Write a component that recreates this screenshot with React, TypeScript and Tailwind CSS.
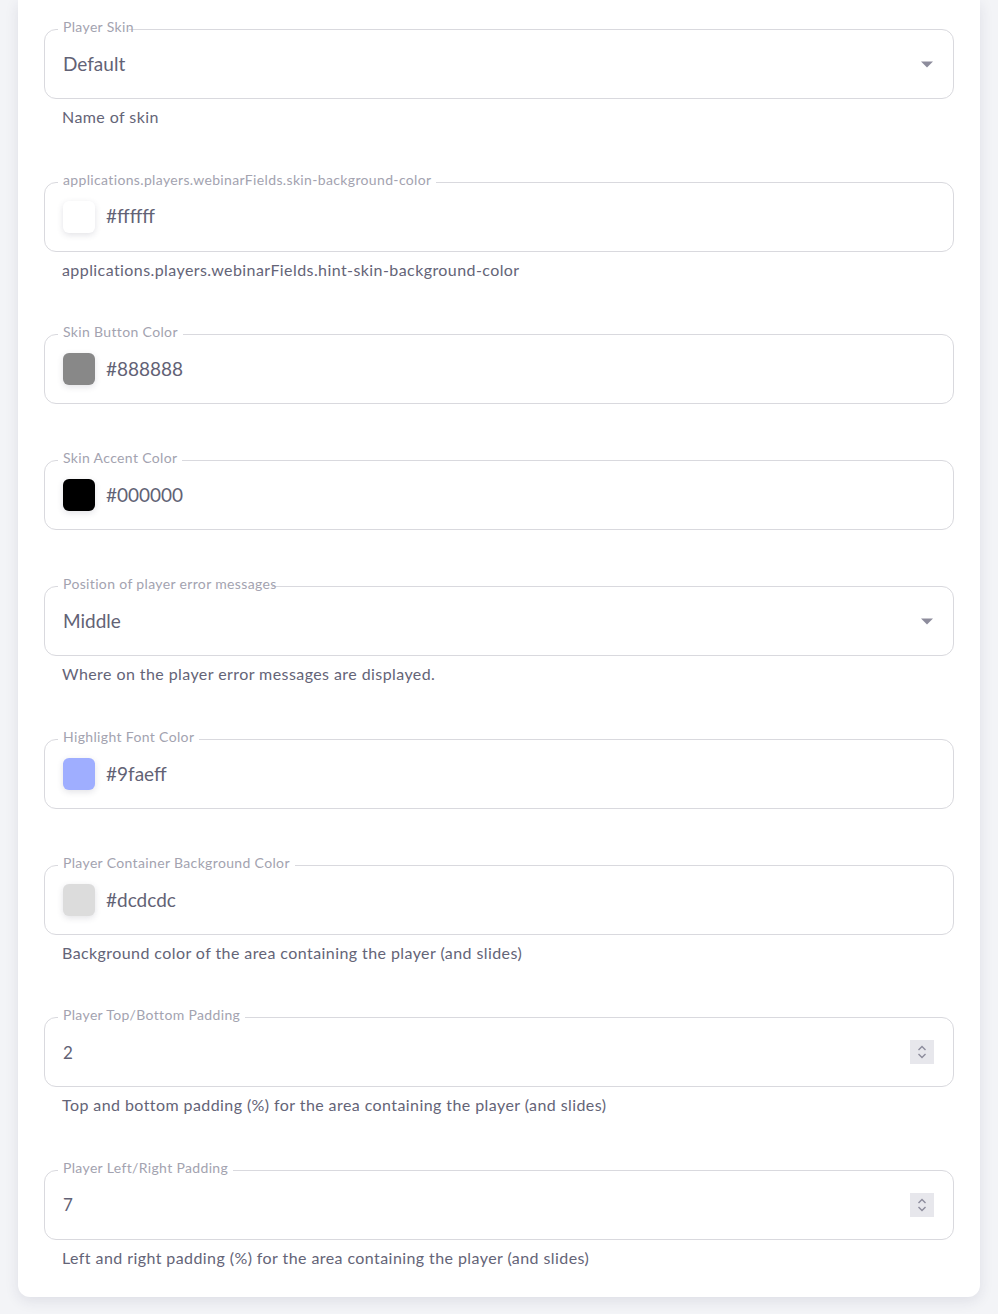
import React from "react";

type Field =
  | { kind: "select"; label: string; value: string; hint?: string }
  | { kind: "color"; label: string; value: string; swatch: string; hint?: string }
  | { kind: "number"; label: string; value: string; hint?: string };

const fields: Field[] = [
  { kind: "select", label: "Player Skin", value: "Default", hint: "Name of skin" },
  {
    kind: "color",
    label: "applications.players.webinarFields.skin-background-color",
    value: "#ffffff",
    swatch: "#ffffff",
    hint: "applications.players.webinarFields.hint-skin-background-color",
  },
  { kind: "color", label: "Skin Button Color", value: "#888888", swatch: "#888888" },
  { kind: "color", label: "Skin Accent Color", value: "#000000", swatch: "#000000" },
  {
    kind: "select",
    label: "Position of player error messages",
    value: "Middle",
    hint: "Where on the player error messages are displayed.",
  },
  { kind: "color", label: "Highlight Font Color", value: "#9faeff", swatch: "#9faeff" },
  {
    kind: "color",
    label: "Player Container Background Color",
    value: "#dcdcdc",
    swatch: "#dcdcdc",
    hint: "Background color of the area containing the player (and slides)",
  },
  {
    kind: "number",
    label: "Player Top/Bottom Padding",
    value: "2",
    hint: "Top and bottom padding (%) for the area containing the player (and slides)",
  },
  {
    kind: "number",
    label: "Player Left/Right Padding",
    value: "7",
    hint: "Left and right padding (%) for the area containing the player (and slides)",
  },
];

function Label({ text, narrow }: { text: string; narrow: boolean }) {
  return (
    <span
      className={
        "absolute left-[13px] top-[-13px] h-[20px] px-[5px] text-[14px] leading-[20px] tracking-[0.35px] text-[#a3a3b0] whitespace-nowrap " +
        (narrow
          ? "bg-[linear-gradient(to_right,white_calc(100%-10px),transparent_calc(100%-10px))]"
          : "bg-white")
      }
    >
      {text}
    </span>
  );
}

function FieldBox({ f }: { f: Field }) {
  return (
    <div>
      <div className="relative h-[70px] rounded-[12px] border border-[#d9d9de] flex items-center pl-[18px] pr-[18px]">
        <Label text={f.label} narrow={f.kind === "select"} />
        {f.kind === "select" && (
          <>
            <span className="flex-1 text-[19px] text-[#626275]">{f.value}</span>
            <svg width="14" height="8" viewBox="0 0 14 8" className="mr-[1px]">
              <path d="M1 1.5 L13 1.5 L7 7.5 Z" fill="#8d8c9c" />
            </svg>
          </>
        )}
        {f.kind === "color" && (
          <>
            <span
              className="w-[32px] h-[32px] rounded-[6px] shadow-[0_2px_6px_rgba(60,60,90,0.15)]"
              style={{ backgroundColor: f.swatch }}
            />
            <span className="ml-[11px] flex-1 text-[19px] text-[#626275]">{f.value}</span>
          </>
        )}
        {f.kind === "number" && (
          <>
            <span className="flex-1 text-[17px] text-[#626275]">{f.value}</span>
            <span className="w-[24px] h-[24px] bg-[#e7e7ec] flex flex-col items-center justify-center gap-[2px] mr-[1px]">
              <svg width="10" height="6" viewBox="0 0 10 6">
                <path d="M1.5 5 L5 1.5 L8.5 5" stroke="#8d8c9c" strokeWidth="1.4" fill="none" />
              </svg>
              <svg width="10" height="6" viewBox="0 0 10 6">
                <path d="M1.5 1 L5 4.5 L8.5 1" stroke="#8d8c9c" strokeWidth="1.4" fill="none" />
              </svg>
            </span>
          </>
        )}
      </div>
      {f.hint && (
        <div className="h-[26.6px] pt-[7px] pl-[18px] text-[16px] leading-[22px] tracking-[0.42px] text-[#646477] whitespace-nowrap">
          {f.hint}
        </div>
      )}
    </div>
  );
}

export default function App() {
  return (
    <div
      className="min-h-[1314px] w-[998px] bg-[#f3f4f7] pb-[17px]"
      style={{ fontFamily: "Lato, 'Noto Sans', sans-serif" }}
    >
      <div className="mx-[18px] bg-white rounded-b-[12px] shadow-[0_4px_14px_rgba(40,40,80,0.10)] px-[26px] pt-[29px] pb-[30px]">
        <div className="flex flex-col gap-[56px]">
          {fields.map((f, i) => (
            <FieldBox key={i} f={f} />
          ))}
        </div>
      </div>
    </div>
  );
}
